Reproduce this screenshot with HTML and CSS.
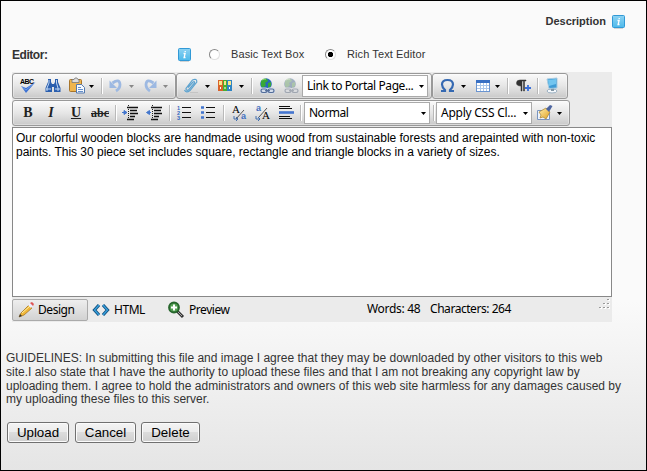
FILE: index.html
```html
<!DOCTYPE html>
<html lang="en">
<head>
<meta charset="utf-8">
<title>Description</title>
<link rel="stylesheet" href="styles.css">
</head>
<body>
<svg class="defs" width="0" height="0">
  <defs>
    <linearGradient id="sky" x2="0" y2="1"><stop stop-color="#8ed3f3"/><stop offset="1" stop-color="#4db9ea"/></linearGradient>
    <linearGradient id="gold" x2="1" y2="1"><stop stop-color="#fff0b0"/><stop offset="1" stop-color="#e0a020"/></linearGradient>
    <symbol id="info" viewBox="0 0 13 14"><path d="M2 13.5h9" stroke="#d3d3d3"/><rect x=".5" y=".5" width="12" height="12" rx="1" fill="url(#sky)" stroke="#3199d6"/><path d="M5.500 5.500h1.600l-1 4h1.400M7.200 3v1" fill="none" stroke="#fff" stroke-width="1.300"/></symbol>
    <symbol id="arrow" viewBox="0 0 5 3"><path d="M0 0h5L2.500 3z" fill="currentColor"/></symbol>
    <symbol id="globe" viewBox="0 0 16 16"><circle cx="7" cy="6" r="5.800" fill="#2868ba"/><path d="M2 3q3-3 6-2l1 2-3 2 1 2-3 3-2-2zM9 5l3-1v4l-3 2z" fill="#38a838"/><path d="M3 2q2-1.500 4-1" stroke="#a8e47c" fill="none"/><g fill="none" stroke="#d4ddeb" stroke-width="3"><rect x="2" y="11" width="6" height="3" rx="1.500"/><rect x="9" y="11" width="6" height="3" rx="1.500"/></g><g fill="none" stroke="#526c99" stroke-width="1.200"><rect x="2" y="11" width="6" height="3.500" rx="1.700"/><rect x="9" y="11" width="6" height="3.500" rx="1.700"/><path d="M6 12.700h5"/></g></symbol>
    <symbol id="undo" viewBox="0 0 16 16"><path d="M4.500 5Q11.500 0 12 6.500q0 4-4 6.500" fill="none" stroke="#9db9e2" stroke-width="2.800"/><path d="M1.500 2.500V10H9z" fill="#9db9e2"/></symbol>
    <symbol id="lines" viewBox="0 0 16 16"><path d="M5 2.500h11M8 5.500h7M8 8.500h8M8 11.500h5M5 14.500h7" stroke="#111" stroke-width="1.400"/><path d="M6.500 0v16" stroke="#222" stroke-dasharray="1 1"/></symbol>
  </defs>
</svg>
<main class="page">
  <header class="heading"><b>Description</b><svg class="info"><use href="#info"/></svg></header>
  <div class="mode">
    <b class="mode-label">Editor:</b>
    <svg class="info"><use href="#info"/></svg>
    <span class="radio"></span><span class="opt basic">Basic Text Box</span>
    <span class="radio on"></span><span class="opt rich">Rich Text Editor</span>
  </div>

  <section class="editor">
    <div class="row">
      <div class="group g-edit">
        <svg class="ic m7" viewBox="0 0 16 16"><text class="tiny" x="0" y="6" textLength="14">ABC</text><path d="M1 8l5 7L15.500 4 6 10z" fill="#3d72d2"/><path d="M2 9l4 3 7-6" fill="none" stroke="#6f9deb"/></svg>
        <svg class="ic m9" viewBox="0 0 16 16"><path d="M3 1h3v3l1 2h2l1-2V1h3v3l2.500 6v4H9V9H7v5H.5v-4L3 4z" fill="#2b5fae"/><path d="M4 2v3L2 10v3M11.500 2v3l1.500 5v3M1 11h5M10 11h5" stroke="#c1d8f5" fill="none"/></svg>
        <svg class="ic m8" viewBox="0 0 16 16"><rect x=".5" y="1.500" width="12" height="12" rx="1" fill="#efb54d" stroke="#a8752a"/><path d="M3 1.500h2L6 0h2l1 1.500h1v3H3z" fill="#ddd" stroke="#777" stroke-width=".8"/><path d="M7.500 6.500h5l3 3V15h-8z" fill="#f6faff" stroke="#5378ad"/><path d="M9 9.500h3M9 11.500h5M9 13.500h5" stroke="#668fca"/></svg>
        <svg class="ar m4"><use href="#arrow"/></svg>
        <i class="sep m7"></i>
        <svg class="ic m6"><use href="#undo"/></svg>
        <svg class="ar dim m5"><use href="#arrow"/></svg>
        <svg class="ic flip m8"><use href="#undo"/></svg>
        <svg class="ar dim m5"><use href="#arrow"/></svg>
      </div>
      <div class="group g-insert">
        <svg class="ic m6" viewBox="0 0 16 16"><path d="M7 14.500h8" stroke="#c4c4c4"/><path d="M5 9.500L10 4q2-1 1.500 1L6 11.500q-3 2-3-1L9.500 2Q14 0 13.800 4L7 12.500Q3 15.500 1.500 12" fill="none" stroke="#5da3d0" stroke-width="1.200"/></svg>
        <svg class="ar m6"><use href="#arrow"/></svg>
        <svg class="ic m7" viewBox="0 0 16 16"><path d="M1 2h5v11H1z" fill="#d9622b"/><path d="M6 2h4v11H6z" fill="#4bae30"/><path d="M10 2h5v11h-5z" fill="#2e84c3"/><path d="M2 3h3v4H2zM7 3h2v4H7zM11 3h3v4h-3z" fill="#f9e48c"/><path d="M3 10h1M7.500 10h1M12 10h1" stroke="#fff" stroke-width="2"/></svg>
        <svg class="ar m6"><use href="#arrow"/></svg>
        <i class="sep m7"></i>
        <svg class="ic m7"><use href="#globe"/></svg>
        <svg class="ic faded m8"><use href="#globe"/></svg>
        <div class="select m3 wide"><span class="link">Link to Portal Page...</span><svg class="ar"><use href="#arrow"/></svg></div>
      </div>
      <div class="group g-extra">
        <svg class="ic m7" viewBox="0 0 16 16"><path d="M1 13h4v-1Q2 9 2 6.500 2 2 7.500 2T13 6.500Q13 9 10 12v1h4" fill="none" stroke="#3569b2" stroke-width="2.200"/></svg>
        <svg class="ar m5"><use href="#arrow"/></svg>
        <svg class="ic m9" viewBox="0 0 16 16"><rect x="1.500" y="2.500" width="13" height="11" fill="#fff" stroke="#6a94d0"/><path d="M1 2h14v3H1z" fill="#376fc4"/><path d="M2 7.500h12M2 10.500h12M5.500 5v8M8.500 5v8M11.500 5v8" stroke="#a9c6eb"/></svg>
        <svg class="ar m4"><use href="#arrow"/></svg>
        <i class="sep m7"></i>
        <svg class="ic m7" viewBox="0 0 16 16"><path d="M5 2h6v1H9.500v10H8.500V3H7v10H6V8Q1.500 8 1.500 5T5 2z" fill="#333" stroke="#333" stroke-width=".5"/><path d="M13 7v6M10 10h6" stroke="#3a6fd8" stroke-width="1.800"/></svg>
        <i class="sep m6"></i>
        <svg class="ic m6" viewBox="0 0 16 16"><ellipse cx="8" cy="13" rx="5" ry="2" fill="#f4f8fc" stroke="#9aafc0"/><path d="M7 9h3v4H7z" fill="#8297a6"/><path d="M3 1l10-1v10l-8 .5z" fill="#3e9bd5" stroke="#a8cce2"/><path d="M4 2l8-1v5L5 8z" fill="#72c5ef"/></svg>
      </div>
    </div>
    <div class="row second">
      <div class="group g-format">
        <span class="ic glyph m7"><b>B</b></span>
        <span class="ic glyph m7"><em>I</em></span>
        <span class="ic glyph m9"><u>U</u></span>
        <span class="ic glyph abc m8"><s>abc</s></span>
        <i class="sep m7"></i>
        <svg class="ic m6" viewBox="0 0 16 16"><use href="#lines"/><path d="M0 7.500h3M2 5.500L5 7.500 2 9.500z" fill="#4376cd" stroke="#4376cd"/></svg>
        <svg class="ic m8" viewBox="0 0 16 16"><use href="#lines"/><path d="M5 7.500H3M3.500 5.500L.5 7.500l3 2z" fill="#4376cd" stroke="#4376cd"/></svg>
        <i class="sep m7"></i>
        <svg class="ic m6" viewBox="0 0 16 16"><path d="M6 2.500h9M6 7.500h9M6 12.500h9" stroke="#111"/><g class="num"><text x="1" y="4.500">1</text><text x="1" y="9.500">2</text><text x="1" y="14.500">3</text></g></svg>
        <svg class="ic m8" viewBox="0 0 16 16"><path d="M6 2.500h9M6 7.500h9M6 12.500h9" stroke="#111"/><path d="M1 2.500h3M1 7.500h3M1 12.500h3" stroke="#4074ce" stroke-width="2.600"/></svg>
        <i class="sep m7"></i>
        <svg class="ic m8" viewBox="0 0 16 16"><text class="cap" x="0" y="7.500">A</text><text class="low" x="9" y="13.500">a</text><path d="M4 14l8-9" stroke="#555"/><path d="M2 11v3h4M4 12l2 2-2 2" fill="none" stroke="#426fae"/></svg>
        <svg class="ic m7" viewBox="0 0 16 16"><text class="low" x="1" y="6">a</text><text class="cap" x="7" y="14">A</text><path d="M4 12l8-9" stroke="#555"/><path d="M1 11v3h4M3 12l2 2-2 2" fill="none" stroke="#426fae"/></svg>
        <svg class="ic m8" viewBox="0 0 16 16"><path d="M0 1.500h11M0 3.500h13M0 11.500h11M0 13.500h13" stroke="#111" stroke-width="1.100"/><path d="M0 7.500h15" stroke="#4475cf" stroke-width="2.600"/></svg>
        <i class="sep m5"></i>
        <div class="select m3 wide"><span class="normal">Normal</span><svg class="ar"><use href="#arrow"/></svg></div>
        <i class="sep m3"></i>
        <div class="select m2 css"><span class="apply">Apply CSS Cl...</span><svg class="ar"><use href="#arrow"/></svg></div>
        <svg class="ic m5" viewBox="0 0 16 16"><path d="M.5 5.500h7l5 2v7H.5z" fill="#eef4fd" stroke="#7894c0"/><path d="M2 7l7-4 4 4-4 7-3-2-3 1 1-3z" fill="url(#gold)" stroke="#a5802c" stroke-width=".7"/><path d="M9 4l4-4 2.500 1L12 7z" fill="#4d65a0"/></svg>
        <svg class="ar m4"><use href="#arrow"/></svg>
      </div>
    </div>
    <div class="content"><p class="c1">Our colorful wooden blocks are handmade using wood from sustainable forests and arepainted with non-toxic</p><p class="c2">paints. This 30 piece set includes square, rectangle and triangle blocks in a variety of sizes.</p></div>
    <footer class="status">
      <div class="tab active"><svg class="ic" viewBox="0 0 16 16"><path d="M1 15l2-4 8-8 3 3-8 7z" fill="#f0b73a" stroke="#a87722" stroke-width=".8"/><path d="M4 11l8-7" stroke="#fff0a0"/><path d="M10 3l2-2 3 3-2 2z" fill="#eef"/><path d="M12 1l2-1 2 2-1 2z" fill="#df5555"/><path d="M1 15l1-3 2 2z" fill="#333"/></svg><span class="design">Design</span></div>
      <div class="tab html"><svg class="ic" viewBox="0 0 16 16"><path d="M6 3L1.500 8 6 13M10 3l4.500 5-4.500 5" fill="none" stroke="#17527f" stroke-width="3.200"/><path d="M6 3L1.500 8 6 13M10 3l4.500 5-4.500 5" fill="none" stroke="#35a1df" stroke-width="1.300"/></svg><span class="markup">HTML</span></div>
      <div class="tab preview"><svg class="ic" viewBox="0 0 16 16"><path d="M9 9l6 6" stroke="#333" stroke-width="3"/><path d="M10 10l4 4" stroke="#aaa"/><circle cx="6" cy="5.500" r="5" fill="#52a052" stroke="#26652c" stroke-width="1.800"/><path d="M6 2.500v6M3 5.500h6" stroke="#fff" stroke-width="2"/></svg><span class="view">Preview</span></div>
      <span class="words">Words: 48</span><span class="chars">Characters: 264</span>
      <svg class="grip" viewBox="0 0 11 11"><path d="M9 1h2M5 5h2M9 5h2M1 9h2M5 9h2M9 9h2" stroke="#fff" stroke-width="2"/><path d="M8 .5h2M4 4.500h2M8 4.500h2M0 8.500h2M4 8.500h2M8 8.500h2" stroke="#999"/></svg>
    </footer>
  </section>

  <div class="guidelines"><p>GUIDELINES: In submitting this file and image I agree that they may be downloaded by other visitors to this web</p><p>site.I also state that I have the authority to upload these files and that I am not breaking any copyright law by</p><p>uploading them. I agree to hold the administrators and owners of this web site harmless for any damages caused by</p><p>my uploading these files to this server.</p></div>
  <div class="actions"><button class="b1">Upload</button><button class="b2">Cancel</button><button class="b3">Delete</button></div>
</main>
</body>
</html>
```
FILE: styles.css
```css
* { box-sizing: border-box; }
body { margin: 0; font: 12px/14px "Liberation Sans", sans-serif; color: #333; }
p { margin: 0; white-space: nowrap; }
svg { display: block; flex: none; overflow: visible; }
.defs { position: absolute; }
.page { width: 647px; height: 471px; border: 1px solid #000; overflow: hidden; background: linear-gradient(#fafafa 0, #fafafa 300px, #e5e5e5 100%); }
.info { width: 13px; height: 14px; }
.heading { display: flex; justify-content: flex-end; align-items: flex-start; gap: 6px; height: 46px; padding: 13px 21px 0 0; font-size: 11px; }
.heading .info { margin-top: 1px; }
.mode { display: flex; height: 25px; padding: 1px 0 0 11px; font-size: 11px; white-space: nowrap; }
.mode-label { width: 166px; font-size: 12px; letter-spacing: -.45px; }
.opt { letter-spacing: .1px; margin-top: -1px; }
.radio { width: 11px; height: 11px; margin: 1px 11px 0 18px; border: 1px solid; border-color: #888 #e0e0e0 #e0e0e0 #888; border-radius: 50%; background: #fff; }
.on { margin-left: 0; background: radial-gradient(circle, #000 0 2.3px, #fff 3px); }
.basic { width: 94px; }

.editor { width: 600px; height: 250px; margin-left: 11px; padding-top: 1px; background: #ebebeb; color: #000; }
.row { display: flex; height: 27px; }
.group { display: flex; align-items: center; flex: none; height: 26px; border: 1px solid #999; border-radius: 3px; background: linear-gradient(#fafafa, #e6e6e6 50%, #c9c9c9); box-shadow: inset 0 0 0 1px #ffffff55; }
.g-edit { width: 164px; }
.g-insert { width: 256px; }
.g-extra { width: 136px; }
.g-format { width: 558px; }
.ic { flex: none; width: 16px; height: 16px; }
.ar { width: 5px; height: 3px; }
.sep { flex: none; width: 1px; height: 16px; background: #b9b9b9; box-shadow: 1px 0 #fff; }
.dim { color: #888; }
.flip { transform: scaleX(-1); }
.faded { opacity: .45; filter: grayscale(.5); }
.m2 { margin-left: 2px; } .m3 { margin-left: 3px; } .m4 { margin-left: 4px; }
.m5 { margin-left: 5px; } .m6 { margin-left: 6px; } .m7 { margin-left: 7px; }
.m8 { margin-left: 8px; } .m9 { margin-left: 9px; }
.tiny { font: bold 7px "Liberation Sans", sans-serif; }
.glyph { display: flex; justify-content: center; font: bold 14px/16px "Liberation Serif", serif; color: #222; }
.abc { font-size: 12px; }
.num { font: bold 5.5px "Liberation Sans", sans-serif; fill: #3467c0; }
.cap { font: 11px "Liberation Serif", serif; }
.low { font: bold 9px "Liberation Sans", sans-serif; fill: #426fc0; }
.select { display: flex; align-items: center; justify-content: space-between; flex: none; height: 22px; padding: 0 3px 0 4px; border: 1px solid #aaa; background: #fff; font: 12px/20px "Noto Sans", sans-serif; white-space: nowrap; }
.link { letter-spacing: -.42px; }
.normal { letter-spacing: -.5px; }
.apply { letter-spacing: -.25px; }
.wide { width: 126px; }
.css { width: 96px; }
.content { height: 170px; border: 1px solid #888; padding: 3px; background: #fff; letter-spacing: -.01px; }
.status { position: relative; display: flex; height: 25px; padding-top: 1px; font: 12px/22px "Noto Sans", sans-serif; white-space: nowrap; letter-spacing: -.45px; }
.tab { display: flex; align-items: center; gap: 5px; height: 22px; margin-top: 1px; padding-left: 5px; }
.active { width: 76px; gap: 4px; border: 1px solid #aaa; border-radius: 2px; background: linear-gradient(#eee, #d2d2d2); }
.html { width: 75px; }
.preview { width: 204px; }
.words { width: 63px; letter-spacing: -.3px; }
.grip { position: absolute; right: 2px; top: 2px; width: 11px; height: 11px; }
.guidelines { padding: 30px 0 0 5px; line-height: 13.8px; }
.actions { display: flex; padding: 15px 0 0 6px; }
button { height: 21px; padding: 0; border: 1px solid #707070; border-radius: 3px; background: linear-gradient(#f4f4f4, #ebebeb 49%, #dcdcdc 50%, #cfcfcf); box-shadow: inset 0 0 0 1px #fbfbfb; color: #000; font: 13.333px/18px "Liberation Sans", sans-serif; }
.b1 { width: 62px; } .b2 { width: 61px; margin: 0 5px 0 6px; } .b3 { width: 59px; }
```
